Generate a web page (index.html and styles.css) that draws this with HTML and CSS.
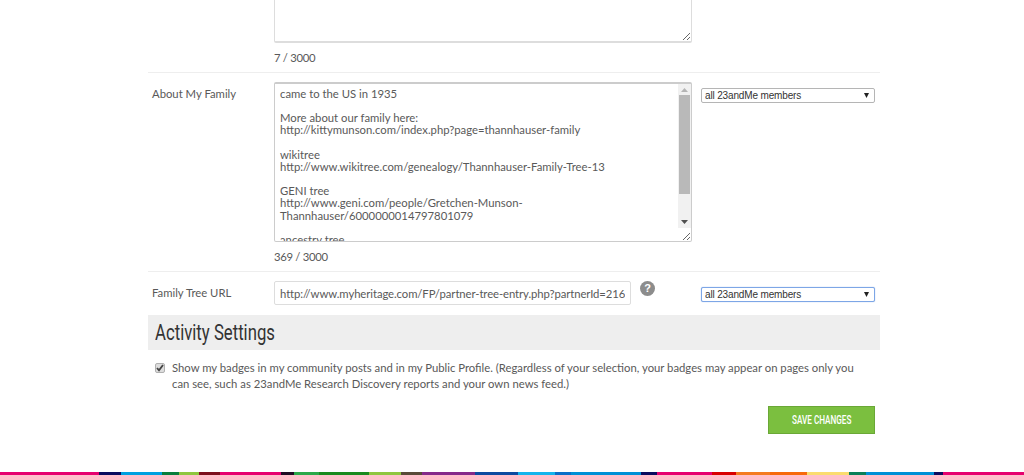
FILE: index.html
```html
<!DOCTYPE html>
<html lang="en">
<head>
<meta charset="utf-8">
<title>Profile settings</title>
<link rel="stylesheet" href="styles.css">
</head>
<body>
<main class="page">
  <form class="form">
    <section class="row row-first">
      <div class="label"></div>
      <div class="field">
        <textarea class="area area-cut" aria-label="About Me"></textarea>
        <p class="count count-first">7 / 3000</p>
      </div>
      <div class="privacy"></div>
    </section>
    <section class="row row-family">
      <label class="label label-family" for="family">About My Family</label>
      <div class="field">
        <div class="area-wrap">
          <textarea class="area area-main" id="family">came to the US in 1935

More about our family here:
http://kittymunson.com/index.php?page=thannhauser-family

wikitree
http://www.wikitree.com/genealogy/Thannhauser-Family-Tree-13

GENI tree
http://www.geni.com/people/Gretchen-Munson-Thannhauser/6000000014797801079

ancestry tree</textarea>
          <div class="scrollbar">
            <svg class="arrow" viewBox="0 0 7 4" width="7" height="4"><path d="M0 4L3.5 0 7 4z" fill="#b5b5b5"/></svg>
            <div class="thumb"></div>
            <svg class="arrow arrow-down" viewBox="0 0 7 4" width="7" height="4"><path d="M0 0L3.5 4 7 0z" fill="#505050"/></svg>
          </div>
        </div>
        <p class="count">369 / 3000</p>
      </div>
      <div class="privacy privacy-family">
        <select class="select" aria-label="Family visibility"><option>all 23andMe members</option></select>
      </div>
    </section>
    <section class="row row-url">
      <label class="label label-url" for="url">Family Tree URL</label>
      <div class="field field-url">
        <input class="url" id="url" type="text" value="http://www.myheritage.com/FP/partner-tree-entry.php?partnerId=216">
        <span class="help">?</span>
      </div>
      <div class="privacy privacy-url">
        <select class="select select-focus" aria-label="URL visibility"><option>all 23andMe members</option></select>
      </div>
    </section>
    <h2 class="band"><span class="band-text">Activity Settings</span></h2>
    <label class="badge-row">
      <input class="check" type="checkbox" checked>
      <span>Show my badges in my community posts and in my Public Profile. (Regardless of your selection, your badges may appear on pages only you can see, such as 23andMe Research Discovery reports and your own news feed.)</span>
    </label>
    <div class="actions">
      <button class="save" type="button"><span class="save-text">SAVE CHANGES</span></button>
    </div>
  </form>
</main>
<footer class="stripe"></footer>
</body>
</html>
```
FILE: styles.css
```css
html, body {
  margin: 0;
  height: 475px;
  overflow: hidden;
  background: #fff;
}
body {
  display: flex;
  flex-direction: column;
  font-family: "Lato", "Open Sans", sans-serif;
  font-size: 11.3px;
  color: #595959;
}
.page {
  flex: 1;
  min-height: 0;
}
.form {
  width: 732px;
  margin-left: 148px;
}
.row {
  display: grid;
  grid-template-columns: 126px 427px 1fr;
  box-sizing: border-box;
}
.row-first {
  height: 73px;
  border-bottom: 1px solid #eee;
}
.row-family {
  height: 199px;
  padding-top: 9px;
  border-bottom: 1px solid #eee;
}
.row-url {
  height: 43px;
  padding-top: 9px;
}
.label {
  padding-left: 4px;
  line-height: 16px;
}
.label-family {
  padding-top: 4px;
}
.label-url {
  padding-top: 4px;
}
.field {
  min-width: 0;
}
.area {
  display: block;
  box-sizing: border-box;
  width: 418px;
  margin: 0;
  padding: 5px;
  border: 1px solid #ccc;
  background: #fff;
  font: 11.3px/12.16px "Lato", "Open Sans", sans-serif;
  color: #595959;
  outline: 0;
}
.area-cut {
  height: 43px;
  border-width: 0 1px 2px;
  border-color: #ddd;
  border-radius: 0 0 2px 2px;
}
.area-wrap {
  position: relative;
  width: 418px;
}
.area-main {
  height: 160px;
  padding: 4px 20px 0 5px;
  border-top: 2px solid #ccc;
  border-radius: 2px;
  overflow: hidden;
}
.scrollbar {
  position: absolute;
  top: 2px;
  right: 1px;
  width: 13px;
  height: 144px;
  display: flex;
  flex-direction: column;
  align-items: center;
  background: #f1f1f1;
}
.arrow {
  flex: none;
  margin-top: 4px;
}
.thumb {
  flex: none;
  width: 11px;
  height: 99px;
  margin-top: 3px;
  background: #b9b9b9;
}
.arrow-down {
  margin-top: 26px;
}
.count {
  margin: 7px 0 0;
  line-height: 15px;
  letter-spacing: -0.3px;
}
.count-first {
  margin-top: 7px;
}
.privacy-family,
.privacy-url {
  padding-top: 6px;
}
.select {
  display: block;
  box-sizing: border-box;
  width: 174px;
  height: 15px;
  margin: 0;
  padding: 0 0 0 3px;
  appearance: none;
  border: 1px solid #b5b5b5;
  border-radius: 2px;
  background: #fff url("data:image/svg+xml,%3Csvg xmlns='http://www.w3.org/2000/svg' width='5' height='5'%3E%3Cpath d='M0 0h5L2.5 5z' fill='%23222'/%3E%3C/svg%3E") no-repeat right 5px center;
  font: 10px/13px "Liberation Sans", Arial, sans-serif;
  letter-spacing: -0.15px;
  color: #333;
}
.select-focus {
  border-color: #7da6e6;
  box-shadow: 0 0 1px #7da6e6;
}
.field-url {
  display: flex;
  align-items: flex-start;
}
.url {
  box-sizing: border-box;
  width: 357px;
  height: 24px;
  margin: 0;
  padding: 0 5px;
  border: 1px solid #ddd;
  border-radius: 2px;
  font: 11.3px "Lato", "Open Sans", sans-serif;
  letter-spacing: -0.08px;
  color: #595959;
  outline: 0;
}
.help {
  flex: none;
  width: 15px;
  height: 15px;
  margin-left: 9px;
  border-radius: 50%;
  background: #8c8c8c;
  color: #fff;
  font: bold 11px/15px "Liberation Sans", Arial, sans-serif;
  text-align: center;
}
.band {
  height: 35px;
  margin: 0;
  padding-left: 7px;
  background: #eee;
  font: 400 22px/35px "Roboto", sans-serif;
  color: #333;
}
.band-text {
  display: inline-block;
  transform: scaleX(0.76);
  transform-origin: left center;
}
.badge-row {
  display: flex;
  gap: 7px;
  padding: 10px 24px 0 7px;
  line-height: 16px;
}
.check {
  flex: none;
  width: 10px;
  height: 10px;
  margin: 3px 0 0;
  appearance: none;
  border: 1px solid #b0b0b0;
  border-radius: 2px;
  background: #ddd url("data:image/svg+xml,%3Csvg xmlns='http://www.w3.org/2000/svg' width='8' height='8'%3E%3Cpath d='M1 4l2 2.4L7 1' fill='none' stroke='%23444' stroke-width='1.8'/%3E%3C/svg%3E") no-repeat center;
}
.actions {
  display: flex;
  justify-content: flex-end;
  padding: 14px 5px 0 0;
}
.save {
  width: 107px;
  height: 28px;
  padding: 0;
  border: 1px solid #6aa836;
  background: #7bbf3f;
  color: #fff;
  font: 500 12px/26px "Roboto", sans-serif;
}
.save-text {
  display: inline-block;
  transform: scaleX(0.68);
}
.stripe {
  flex: none;
  height: 3px;
  background: linear-gradient(to right,
    #e6006e 0 99px, #0b0b5e 99px 121px, #00a0e0 121px 162px, #0a7d3c 162px 179px,
    #8fc63f 179px 199px, #7d0f1e 199px 220px, #e6006e 220px 281px, #200c24 281px 294px,
    #2ba84a 294px 319px, #1a8a1f 319px 369px, #8fc63f 369px 401px, #594a38 401px 422px,
    #852a8a 422px 475px, #0d4aa0 475px 518px, #14b4ec 518px 555px, #0a6fc8 555px 571px,
    #0090d6 571px 641px, #0b0b5e 641px 657px, #e6006e 657px 712px, #d90000 712px 736px,
    #f47b20 736px 770px, #f76a0a 770px 807px, #fbdc6e 807px 849px, #0b7f58 849px 866px,
    #0090d6 866px 934px, #0b0b5e 934px 943px, #e6006e 943px 1024px);
}
```
